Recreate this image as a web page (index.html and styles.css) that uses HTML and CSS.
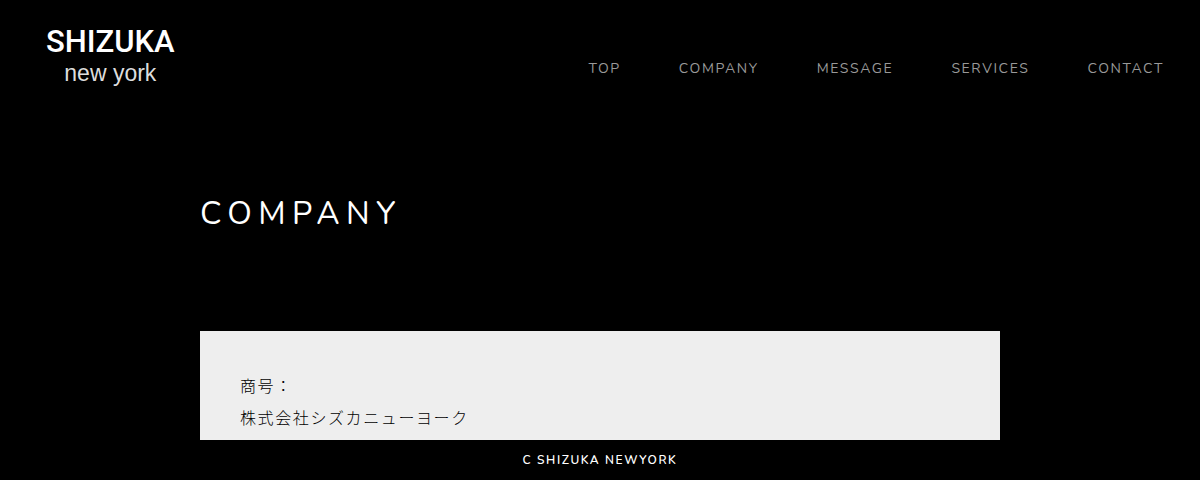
FILE: index.html
```html
<!DOCTYPE html>
<html lang="ja">
<head>
    <meta charset="UTF-8">
    <meta name="viewport" content="width=device-width, initial-scale=1.0">
    <title>COMPANY | SHIZUKA new york</title>
    <link rel="stylesheet" href="styles.css">
</head>
<body>

    <header class="header">
        <a class="logo" href="#">
            <span class="logo-name">SHIZUKA</span>
            <span class="logo-city">new york</span>
        </a>
        <nav class="nav">
            <a href="#">TOP</a>
            <a href="#company">COMPANY</a>
            <a href="#">MESSAGE</a>
            <a href="#">SERVICES</a>
            <a href="#">CONTACT</a>
        </nav>
    </header>

    <main class="main" id="company">
        <h1 class="title">COMPANY</h1>
        <div class="card">
            <p>商号：<br>株式会社シズカニューヨーク</p>
        </div>
    </main>

    <footer class="footer">C SHIZUKA NEWYORK</footer>

</body>
</html>
```

FILE: styles.css
```css
* {
    box-sizing: border-box;
}

body {
    margin: 0;
    background-color: #000;
    color: #fff;
    font-family: Nunito, Lato, "Noto Sans CJK JP", sans-serif;
    letter-spacing: 0.1em;
}

a {
    text-decoration: none;
}

/* --- HEADER --- */
.header {
    display: flex;
    justify-content: space-between;
    align-items: flex-start;
    padding: 24px 36px 0 46px;
}

.logo {
    display: flex;
    flex-direction: column;
    align-items: center;
    color: #fff;
    letter-spacing: normal;
}

.logo-name {
    font: 500 31px/36px Roboto, sans-serif;
}

.logo-city {
    font: 23px/26px "Liberation Sans", Arial, sans-serif;
    color: #ddd;
}

.nav {
    display: flex;
    gap: 58px;
    padding-top: 33px;
    font-size: 14px;
    line-height: 24px;
}

.nav a {
    color: #999;
}

.nav a:hover {
    color: #fff;
}

/* --- MAIN --- */
.main {
    max-width: 800px;
    margin: 0 auto;
}

.title {
    margin: 104px 0 93px;
    font-size: 32px;
    font-weight: 400;
    line-height: 48px;
    letter-spacing: 0.2em;
}

.card {
    padding: 40px;
    background-color: #eee;
    color: #000;
    font-weight: 300;
    line-height: 32px;
}

.card p {
    margin: 0;
}

/* --- FOOTER --- */
.footer {
    position: fixed;
    left: 0;
    right: 0;
    bottom: 0;
    background-color: #000;
    font-size: 12px;
    font-weight: 600;
    line-height: 40px;
    text-align: center;
}
```
